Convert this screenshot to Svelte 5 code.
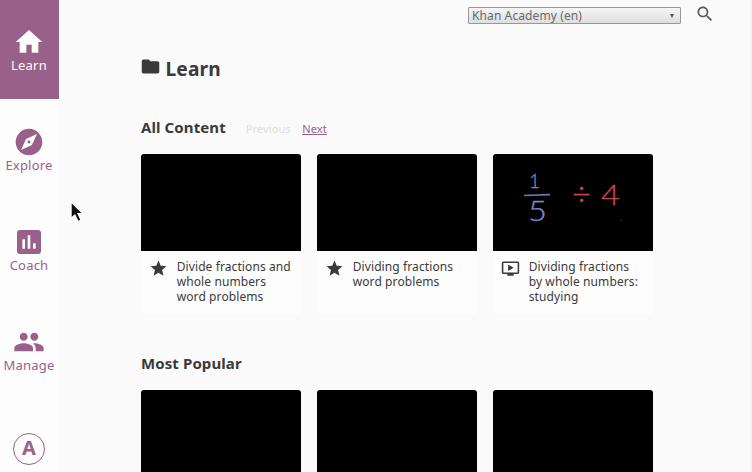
<script>
  const nav = [
    { label: 'Learn', active: true, path: 'M10 20v-6h4v6h5v-8h3L12 3 2 12h3v8z' },
    { label: 'Explore', path: 'M12 10.9c-.61 0-1.1.49-1.1 1.1s.49 1.1 1.1 1.1 1.1-.49 1.1-1.1-.49-1.1-1.1-1.1zM12 2C6.48 2 2 6.48 2 12s4.48 10 10 10 10-4.48 10-10S17.52 2 12 2zm2.19 12.19L6 18l3.81-8.19L18 6l-3.81 8.19z' },
    { label: 'Coach', path: 'M19 3H5c-1.1 0-2 .9-2 2v14c0 1.1.9 2 2 2h14c1.1 0 2-.9 2-2V5c0-1.1-.9-2-2-2zM9 17H7v-7h2v7zm4 0h-2V7h2v10zm4 0h-2v-4h2v4z' },
    { label: 'Manage', path: 'M16 11c1.66 0 2.99-1.34 2.99-3S17.66 5 16 5c-1.66 0-3 1.34-3 3s1.34 3 3 3zm-8 0c1.66 0 2.99-1.34 2.99-3S9.66 5 8 5C6.34 5 5 6.34 5 8s1.34 3 3 3zm0 2c-2.33 0-7 1.17-7 3.5V19h14v-2.5c0-2.33-4.67-3.5-7-3.5zm8 0c-.29 0-.62.02-.97.05 1.16.84 1.97 1.97 1.97 3.45V19h6v-2.5c0-2.33-4.67-3.5-7-3.5z' }
  ];
  const star = 'M12 17.27L18.18 21l-1.64-7.03L22 9.24l-7.19-.61L12 2 9.19 8.63 2 9.24l5.46 4.73L5.82 21z';
  const video = 'M21 3H3c-1.11 0-2 .89-2 2v12c0 1.1.89 2 2 2h5v2h8v-2h5c1.1 0 1.99-.9 1.99-2L23 5c0-1.11-.9-2-2-2zm0 14H3V5h18v12zm-5-6l-7 4V7z';
  const cards = [
    { icon: star, title: 'Divide fractions and whole numbers word problems' },
    { icon: star, title: 'Dividing fractions word problems' },
    { icon: video, lesson: true, title: 'Dividing fractions by whole numbers: studying' }
  ];
</script>

<div class="app">
  <nav>
    {#each nav as item}
      <div class="item" class:active={item.active}>
        <svg width="32" height="32" viewBox="0 0 24 24"><path d={item.path} /></svg>
        <span>{item.label}</span>
      </div>
    {/each}
    <div class="avatar">A</div>
  </nav>

  <main>
    <header>
      <div class="select"><span>Khan Academy (en)</span><i></i></div>
      <svg class="search" width="20" height="20" viewBox="0 0 24 24"><path d="M15.5 14h-.79l-.28-.27C15.41 12.59 16 11.11 16 9.5 16 5.91 13.09 3 9.5 3S3 5.91 3 9.5 5.91 16 9.5 16c1.61 0 3.09-.59 4.23-1.57l.27.28v.79l5 4.99L20.49 19l-4.99-5zm-6 0C7.01 14 5 11.99 5 9.5S7.01 5 9.5 5 14 7.01 14 9.5 11.99 14 9.5 14z" /></svg>
    </header>
    <h1>
      <svg width="21" height="21" viewBox="0 0 24 24"><path d="M10 4H4c-1.1 0-1.99.9-1.99 2L2 18c0 1.1.9 2 2 2h16c1.1 0 2-.9 2-2V8c0-1.1-.9-2-2-2h-8l-2-2z" /></svg>
      <span>Learn</span>
    </h1>
    <section>
      <div class="heading">
        <h2>All Content</h2>
        <span class="prev">Previous</span>
        <a href="#next">Next</a>
      </div>
      <div class="cards">
        {#each cards as card}
          <article>
            <div class="thumb">
              {#if card.lesson}
                <svg class="lesson" width="160" height="97" viewBox="0 0 160 97">
                  <text x="36" y="34" font-size="19" fill="#8583c6">1</text>
                  <path d="M31 41.500L57 40.600" stroke="#7774b8" stroke-width="1.600" />
                  <text x="35" y="67" font-size="27" textLength="19" lengthAdjust="spacingAndGlyphs" fill="#8583c6">5</text>
                  <text x="79" y="52" font-size="33" fill="#c8474c">÷</text>
                  <text x="108" y="51" font-size="28" textLength="19" lengthAdjust="spacingAndGlyphs" fill="#c8474c">4</text>
                  <circle cx="128" cy="66.500" r=".5" fill="#777" />
                </svg>
              {/if}
            </div>
            <div class="caption">
              <svg width="19" height="19" viewBox="0 0 24 24"><path d={card.icon} /></svg>
              <p>{card.title}</p>
            </div>
          </article>
        {/each}
      </div>
    </section>
    <section class="popular">
      <div class="heading"><h2>Most Popular</h2></div>
      <div class="cards">
        {#each [1, 2, 3] as n (n)}
          <article><div class="thumb"></div></article>
        {/each}
      </div>
    </section>
  </main>
  <svg class="cursor" width="16" height="24" viewBox="0 0 14 22"><path d="M1.500 1.500V17l3.500-3.200 2.900 6 3-1.400-2.900-5.800h4.700z" fill="#111" stroke="#fff" stroke-width="1.300" /></svg>
</div>

<style>
  :global(body) { margin: 0; overflow: hidden; }
  .app {
    position: relative;
    display: flex;
    width: 752px;
    height: 472px;
    overflow: hidden;
    box-sizing: border-box;
    border-right: 2px solid #f3f3f3;
    background: #fafafa;
    color: #3a3a3a;
    font-family: 'Noto Sans', sans-serif;
    font-size: 12px;
    letter-spacing: 0.1px;
  }
  svg { display: block; fill: currentColor; flex: none; }
  nav { width: 59px; flex: none; background: #fdfdfd; color: #996189; }
  .item {
    box-sizing: border-box;
    height: 100px;
    padding: 26px 1px 0 0;
    display: flex;
    flex-direction: column;
    align-items: center;
    font-size: 13px;
    line-height: 14px;
    letter-spacing: 0.2px;
  }
  .item svg { margin-right: 1px; }
  .item.active { height: 99px; margin-bottom: 1px; background: #996189; color: #fdfdfd; }
  .item span { white-space: nowrap; }
  .avatar {
    box-sizing: border-box;
    width: 32px;
    height: 32px;
    margin: 33px auto 0 13px;
    border: 1px solid #996189;
    border-radius: 50%;
    text-align: center;
    font-size: 20px;
    font-weight: 700;
    line-height: 28px;
  }
  main { flex: 1; padding-left: 82px; }
  header { display: flex; height: 57px; padding-left: 327px; }
  .select {
    box-sizing: border-box;
    display: flex;
    align-items: center;
    justify-content: space-between;
    width: 213px;
    height: 17px;
    margin-top: 7px;
    padding: 0 6px 0 3px;
    border: 1px solid #989898;
    border-radius: 1px;
    background: linear-gradient(#f5f5f5, #dedede);
    color: #686868;
    line-height: 15px;
  }
  .select i { border: 2.5px solid transparent; border-top: 4px solid #555; border-bottom: 0; }
  .search { margin: 4px 0 0 14px; color: #5a5a5a; }
  h1 { display: flex; margin: 0; height: 60px; font-size: 19.200px; line-height: 24px; }
  h1 svg { margin: -1px 4.500px 0 -1px; }
  h2 { margin: 0; font-size: 15px; line-height: 20px; }
  .heading { display: flex; align-items: baseline; height: 37px; font-size: 11px; }
  .prev { margin-left: 20px; color: #dedede; }
  a { margin-left: 11.500px; color: #996189; text-decoration: underline; }
  .cards { display: flex; gap: 16px; }
  article { width: 160px; height: 160px; flex: none; background: #fdfdfd; border-radius: 3px; overflow: hidden; }
  .thumb { height: 97px; background: #000; }
  .lesson { font-family: Lato, sans-serif; font-weight: 300; letter-spacing: 0; }
  .lesson text { stroke-width: 0.3; stroke: #8583c6; }
  .lesson text:nth-of-type(n + 3) { stroke: #c8474c; }
  .caption { display: flex; padding: 8px 0 0 8px; }
  .caption p { margin: 0 0 0 8.700px; width: 117px; line-height: 15px; }
  .popular { margin-top: 39px; }
  .cursor { position: absolute; left: 69px; top: 200px; }
</style>
